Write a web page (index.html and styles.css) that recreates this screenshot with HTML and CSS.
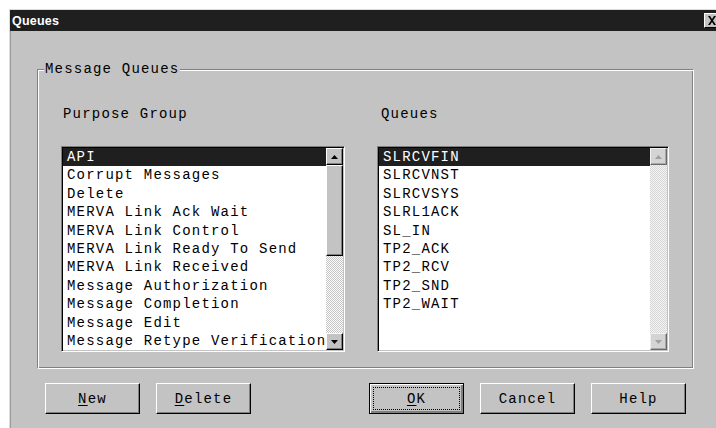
FILE: index.html
```html
<!DOCTYPE html>
<html lang="en">
<head>
<meta charset="utf-8">
<title>Queues</title>
<link rel="stylesheet" href="styles.css">
</head>
<body>
<div class="window">
  <div class="titlebar">
    <span class="title">Queues</span>
    <span class="close">
      <svg width="10" height="9" viewBox="0 0 10 9"><path d="M1 0h2l2 3 2-3h2L6 4.5 9 9H7L5 6 3 9H1l3-4.5z" fill="#000"/></svg>
    </span>
  </div>
  <div class="client">
    <div class="group">
      <span class="legend">Message Queues</span>
      <div class="columns">
        <div class="column col-left">
          <div class="label">Purpose Group</div>
          <div class="listbox list-left">
            <ul class="items">
              <li class="selected">API</li>
              <li>Corrupt Messages</li>
              <li>Delete</li>
              <li>MERVA Link Ack Wait</li>
              <li>MERVA Link Control</li>
              <li>MERVA Link Ready To Send</li>
              <li>MERVA Link Received</li>
              <li>Message Authorization</li>
              <li>Message Completion</li>
              <li>Message Edit</li>
              <li>Message Retype Verification</li>
            </ul>
            <div class="scrollbar">
              <span class="sbtn"><svg width="7" height="4" viewBox="0 0 7 4"><path d="M3.5 0L7 4H0z" fill="#000"/></svg></span>
              <span class="thumb"></span>
              <span class="track"></span>
              <span class="sbtn"><svg width="7" height="4" viewBox="0 0 7 4"><path d="M0 0h7L3.5 4z" fill="#000"/></svg></span>
            </div>
          </div>
        </div>
        <div class="column col-right">
          <div class="label label-right">Queues</div>
          <div class="listbox list-right">
            <ul class="items">
              <li class="selected">SLRCVFIN</li>
              <li>SLRCVNST</li>
              <li>SLRCVSYS</li>
              <li>SLRL1ACK</li>
              <li>SL_IN</li>
              <li>TP2_ACK</li>
              <li>TP2_RCV</li>
              <li>TP2_SND</li>
              <li>TP2_WAIT</li>
            </ul>
            <div class="scrollbar disabled">
              <span class="sbtn"><svg width="7" height="4" viewBox="0 0 7 4"><path d="M3.5 0L7 4H0z" fill="#a0a0a0"/></svg></span>
              <span class="track"></span>
              <span class="sbtn"><svg width="7" height="4" viewBox="0 0 7 4"><path d="M0 0h7L3.5 4z" fill="#a0a0a0"/></svg></span>
            </div>
          </div>
        </div>
      </div>
    </div>
    <div class="buttons">
      <div class="btn-group">
        <button class="btn"><u>N</u>ew</button>
        <button class="btn"><u>D</u>elete</button>
      </div>
      <div class="btn-group">
        <button class="btn default"><span class="focus"><u>O</u>K</span></button>
        <button class="btn">Cancel</button>
        <button class="btn">Help</button>
      </div>
    </div>
  </div>
</div>
</body>
</html>
```

FILE: styles.css
```css
html, body {
  margin: 0;
  padding: 0;
  background: #ffffff;
  overflow: hidden;
}

body {
  padding: 9px 0 0 9px;
  width: 716px;
  height: 428px;
  box-sizing: border-box;
}

.window {
  width: 713px;
  height: 430px;
  background: #c3c3c3;
  border-top: 1px solid #dcdcdc;
  border-left: 1px solid #dcdcdc;
  box-shadow: inset 1px 0 0 #9a9a9a;
  box-sizing: border-box;
  font-family: "Liberation Mono", "DejaVu Sans Mono", monospace;
  font-size: 14px;
  letter-spacing: 1.2px;
  color: #000;
}

/* title bar */
.titlebar {
  height: 21px;
  background: #1f1f1f;
  display: flex;
  align-items: center;
  padding: 0 2px 0 2px;
}

.title {
  font-family: "Liberation Sans", Arial, sans-serif;
  font-weight: bold;
  font-size: 12.5px;
  letter-spacing: 0.2px;
  color: #ffffff;
}

.close {
  margin-left: auto;
  width: 16px;
  height: 15px;
  box-sizing: border-box;
  background: #c3c3c3;
  border-top: 1px solid #ffffff;
  border-left: 1px solid #ffffff;
  border-right: 1px solid #000;
  border-bottom: 1px solid #000;
  display: flex;
  align-items: center;
  justify-content: center;
}

/* client area */
.client {
  padding: 38px 0 0 27px;
}

.group {
  position: relative;
  width: 657px;
  height: 300px;
  box-sizing: border-box;
  border-top: 1px solid #808080;
  border-left: 1px solid #808080;
  border-right: 1px solid #ffffff;
  border-bottom: 1px solid #ffffff;
  box-shadow: inset 1px 1px 0 #ffffff, inset -1px -1px 0 #808080;
  padding: 35px 0 0 23px;
}

.legend {
  position: absolute;
  top: -10px;
  left: 6px;
  line-height: 18px;
  padding: 0 1px;
  background: #c3c3c3;
}

.columns {
  display: flex;
  gap: 32px;
}

.column {
  display: flex;
  flex-direction: column;
  gap: 23px;
}

.label {
  line-height: 18px;
  padding-left: 2px;
}

.label-right {
  padding-left: 4px;
}

/* list boxes */
.listbox {
  display: flex;
  height: 206px;
  box-sizing: border-box;
  border-top: 1px solid #808080;
  border-left: 1px solid #808080;
  border-right: 1px solid #ffffff;
  border-bottom: 1px solid #ffffff;
  box-shadow: inset 1px 1px 0 #000, inset -1px -1px 0 #c3c3c3;
  padding: 1px;
  background: #ffffff;
}

.list-left { width: 284px; }
.list-right { width: 292px; }

.items {
  list-style: none;
  margin: 0;
  padding: 0;
  flex: 1;
  overflow: hidden;
  white-space: nowrap;
}

.items li {
  height: 18.4px;
  line-height: 18.4px;
  padding-left: 4px;
}

.items li.selected {
  background: #1f1f1f;
  color: #ffffff;
}

/* scroll bars */
.scrollbar {
  width: 17px;
  display: flex;
  flex-direction: column;
  background: repeating-conic-gradient(#ffffff 0 25%, #c3c3c3 0 50%) 0 0 / 2px 2px;
}

.sbtn, .thumb {
  display: flex;
  align-items: center;
  justify-content: center;
  box-sizing: border-box;
  background: #c3c3c3;
  border-top: 1px solid #ffffff;
  border-left: 1px solid #ffffff;
  border-right: 1px solid #000;
  border-bottom: 1px solid #000;
  box-shadow: inset -1px -1px 0 #808080;
}

.sbtn {
  height: 17px;
  flex: none;
}

.thumb {
  height: 91px;
  flex: none;
}

.track {
  flex: 1;
}

.scrollbar.disabled {
  background: repeating-conic-gradient(#f4f4f4 0 25%, #d6d6d6 0 50%) 0 0 / 2px 2px;
}

.scrollbar.disabled .sbtn {
  background: #d4d4d4;
  border-color: #f0f0f0 #6a6a6a #6a6a6a #f0f0f0;
  box-shadow: inset -1px -1px 0 #a8a8a8;
}

/* push buttons */
.buttons {
  display: flex;
  gap: 118px;
  padding: 14px 0 0 8px;
}

.btn-group {
  display: flex;
  gap: 16px;
}

.btn {
  width: 95px;
  height: 31px;
  margin: 0;
  padding: 0;
  box-sizing: border-box;
  background: #c3c3c3;
  border-top: 1px solid #ffffff;
  border-left: 1px solid #ffffff;
  border-right: 1px solid #000;
  border-bottom: 1px solid #000;
  box-shadow: inset -1px -1px 0 #808080;
  font-family: "Liberation Mono", "DejaVu Sans Mono", monospace;
  font-size: 14px;
  letter-spacing: 1.2px;
  color: #000;
  display: flex;
  align-items: center;
  justify-content: center;
}

.btn u {
  text-decoration-thickness: 1px;
  text-underline-offset: 2px;
}

.btn.default {
  border: 1px solid #000;
  box-shadow: inset 1px 1px 0 #ffffff, inset -2px -2px 0 #808080;
  padding: 3px;
}

.focus {
  display: flex;
  align-items: center;
  justify-content: center;
  width: 100%;
  height: 100%;
  box-sizing: border-box;
  border: 1px dotted #000;
}
```
